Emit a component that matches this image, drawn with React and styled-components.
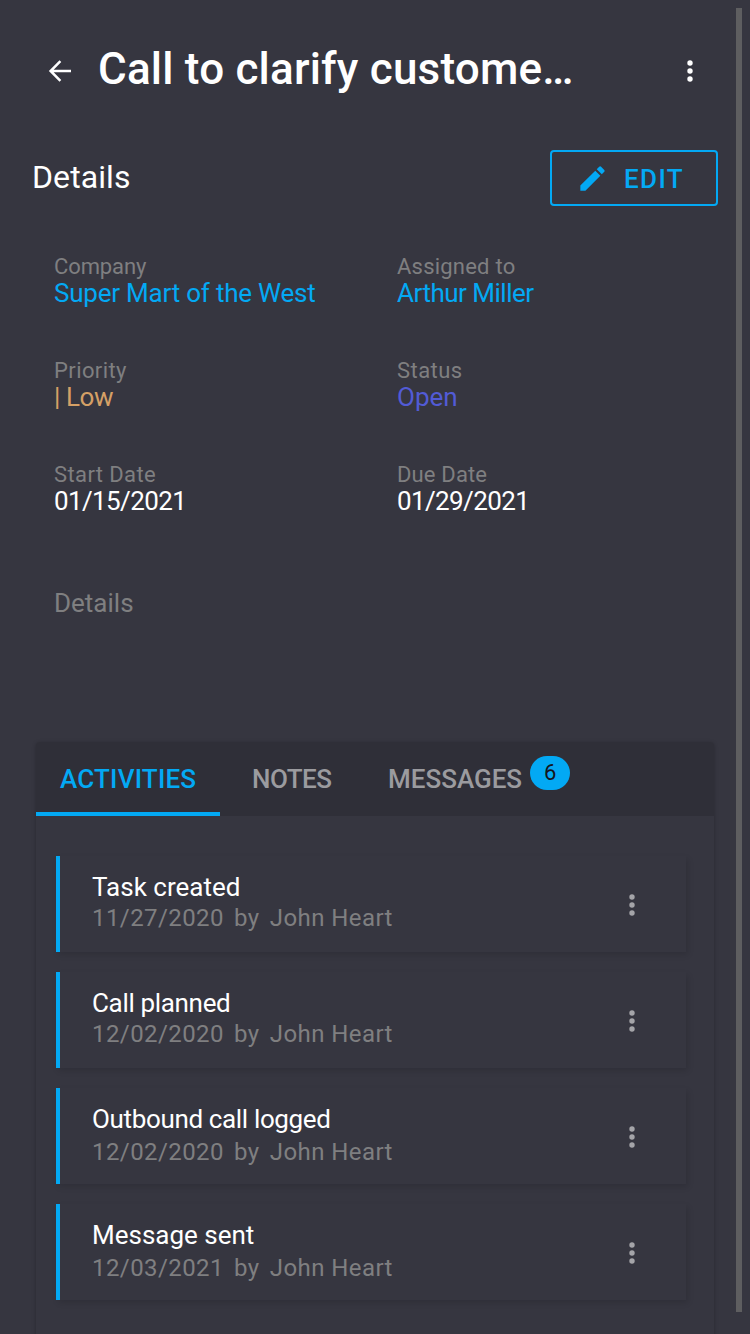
import React from 'react';
import styled, { createGlobalStyle } from 'styled-components';

const Global = createGlobalStyle`
  * { box-sizing: border-box; }
  html, body { margin: 0; height: 1334px; overflow: hidden; background: #363640; }
  body { font-family: Roboto, sans-serif; color: #fff; }
`;
const Screen = styled.div`
  position: relative;
  width: 750px;
  height: 1334px;
  overflow: hidden;
  background: #363640;
`;
const Header = styled.header`
  display: flex;
  align-items: center;
  height: 141px;
  padding: 0 48px;
`;
const Title = styled.h1`
  margin: -3px 0 0 26px;
  width: 480px;
  font-size: 44px;
  line-height: 56px;
  font-weight: 500;
  letter-spacing: 0.2px;
  overflow: hidden;
  white-space: nowrap;
`;
const IconButton = styled.button`
  display: flex;
  padding: 0;
  border: 0;
  background: none;
  color: ${(p) => p.$color || '#fff'};
  margin-top: ${(p) => p.$top || 0}px;
  margin-left: ${(p) => (p.$end ? 'auto' : 0)};
  margin-right: ${(p) => p.$right || 0}px;
`;
const Toolbar = styled.div`
  display: flex;
  justify-content: space-between;
  height: 56px;
  margin: 9px 32px 0;
`;
const Heading = styled.h2`
  margin: 0;
  font-size: 32px;
  line-height: 54px;
  font-weight: 400;
  letter-spacing: 0.1px;
`;
const EditButton = styled.button`
  display: flex;
  align-items: center;
  width: 168px;
  padding: 2px 0 0 26.5px;
  gap: 18.5px;
  border: 2px solid #03a9f4;
  border-radius: 4px;
  background: none;
  color: #03a9f4;
  font: 500 26px/54px Roboto, sans-serif;
  letter-spacing: 1.4px;
`;
const PencilIcon = styled.svg`
  width: 27px;
  height: 27px;
  margin-top: -2px;
`;
const Fields = styled.dl`
  display: grid;
  grid-template-columns: 343px 1fr;
  grid-auto-rows: 104px;
  margin: 48px 0 0 54px;
`;
const Label = styled.dt`
  font-size: 22px;
  line-height: 26px;
  letter-spacing: ${(p) => p.$track}px;
  color: #7f7f80;
`;
const Value = styled.dd`
  margin: -1px 0 0;
  width: 262px;
  overflow: hidden;
  white-space: nowrap;
  font-size: 26px;
  line-height: 28px;
  letter-spacing: ${(p) => p.$track}px;
  color: ${(p) => p.$color || '#fff'};
`;
const Notes = styled.div`
  margin: 21px 0 0 54px;
  height: 155px;
  font-size: 26px;
  line-height: 32px;
  color: #7f7f80;
`;
const Panel = styled.section`
  width: 678px;
  height: 620px;
  margin-left: 36px;
  border-radius: 4px;
  box-shadow: 0 1px 4px rgba(0, 0, 0, 0.25);
`;
const Tabs = styled.nav`
  display: flex;
  height: 74px;
  background: #2f2f38;
  border-radius: 4px 4px 0 0;
`;
const Tab = styled.div`
  display: flex;
  width: ${(p) => p.$width}px;
  padding-left: 24px;
  margin-right: 8px;
  font-size: 26px;
  line-height: 74px;
  font-weight: 500;
  letter-spacing: ${(p) => p.$track || 0}px;
  color: ${(p) => (p.$active ? '#03a9f4' : '#9b9b9f')};
  box-shadow: ${(p) => (p.$active ? 'inset 0 -4px #03a9f4' : 'none')};
`;
const Badge = styled.span`
  width: 40px;
  height: 34px;
  margin: 14px 0 0 8px;
  border-radius: 17px;
  background: #03a9f4;
  color: #15151c;
  font-size: 22px;
  font-weight: 400;
  line-height: 34px;
  text-align: center;
`;
const List = styled.div`
  display: flex;
  flex-direction: column;
  gap: 20px;
  padding: 40px 28px 0 20px;
`;
const Activity = styled.article`
  display: flex;
  align-items: center;
  height: 96px;
  padding-left: 32px;
  border-left: 4px solid #03a9f4;
  box-shadow: 2px 3px 6px rgba(0, 0, 0, 0.12);
`;
const Summary = styled.div`
  height: 66px;
`;
const Name = styled.div`
  font-size: 26px;
  line-height: 32px;
  letter-spacing: ${(p) => p.$track}px;
`;
const Meta = styled.div`
  padding-top: ${(p) => p.$drop}px;
  font-size: 24px;
  line-height: 30px;
  letter-spacing: 0.42px;
  word-spacing: 3.8px;
  color: #7f7f80;
`;
const Person = styled.span`
  word-spacing: 0;
`;
const Scrollbar = styled.div`
  position: absolute;
  top: 8px;
  right: 8px;
  width: 6px;
  height: 1304px;
  background: #5e5e60;
`;
const Dots = () => (
  <svg width="8" height="24" viewBox="0 0 8 24" fill="currentColor">
    <circle cx="4" cy="4" r="2.7" /><circle cx="4" cy="12" r="2.7" /><circle cx="4" cy="20" r="2.7" />
  </svg>
);

const fields = [
  { label: 'Company', labelTrack: -0.1, value: 'Super Mart of the West', track: -0.22, color: '#03a9f4' },
  { label: 'Assigned to', labelTrack: 0.22, value: 'Arthur Miller', track: -0.5, color: '#03a9f4' },
  { label: 'Priority', labelTrack: 0.4, value: '| Low', track: -0.4, color: '#d5a066' },
  { label: 'Status', labelTrack: 0.45, value: 'Open', track: 0, color: '#525bd6' },
  { label: 'Start Date', labelTrack: 0.4, value: '01/15/2021', track: -0.62 },
  { label: 'Due Date', labelTrack: 0.15, value: '01/29/2021', track: -0.62 },
];
const activities = [
  { name: 'Task created', date: '11/27/2020', drop: 0, track: 0 },
  { name: 'Call planned', date: '12/02/2020', drop: 0, track: -0.33 },
  { name: 'Outbound call logged', date: '12/02/2020', drop: 2, track: -0.35 },
  { name: 'Message sent', date: '12/03/2021', drop: 2, track: 0 },
];

export default function App() {
  return (
    <Screen>
      <Global />
      <Header>
        <IconButton aria-label="Back">
          <svg width="24" height="24" viewBox="0 0 24 24" fill="none" stroke="currentColor" strokeWidth="2.5">
            <path d="M23 12H3M12.4 2.2 2.6 12l9.8 9.8" />
          </svg>
        </IconButton>
        <Title>Call to clarify custome…</Title>
        <IconButton $end $right={8.5} aria-label="More"><Dots /></IconButton>
      </Header>
      <Toolbar>
        <Heading>Details</Heading>
        <EditButton>
          <PencilIcon viewBox="2 2 20 20" fill="currentColor">
            <path d="M3 17.25V21h3.75L17.81 9.94l-3.75-3.75L3 17.25zM20.71 7.04a1 1 0 0 0 0-1.41l-2.34-2.34a1 1 0 0 0-1.41 0l-1.83 1.83 3.75 3.75 1.83-1.83z" />
          </PencilIcon>
          EDIT
        </EditButton>
      </Toolbar>
      <Fields>
        {fields.map((f) => (
          <div key={f.label}>
            <Label $track={f.labelTrack}>{f.label}</Label>
            <Value $color={f.color} $track={f.track}>{f.value}</Value>
          </div>
        ))}
      </Fields>
      <Notes>Details</Notes>
      <Panel>
        <Tabs>
          <Tab $active $width={184} $track={0.2}>ACTIVITIES</Tab>
          <Tab $width={128} $track={-0.5}>NOTES</Tab>
          <Tab $width={230}>MESSAGES<Badge>6</Badge></Tab>
        </Tabs>
        <List>
          {activities.map((a) => (
            <Activity key={a.name}>
              <Summary>
                <Name $track={a.track}>{a.name}</Name>
                <Meta $drop={a.drop}>{a.date} by <Person>John Heart</Person></Meta>
              </Summary>
              <IconButton $end $top={1} $right={50.5} $color="#a4a4a8" aria-label="More"><Dots /></IconButton>
            </Activity>
          ))}
        </List>
      </Panel>
      <Scrollbar />
    </Screen>
  );
}
